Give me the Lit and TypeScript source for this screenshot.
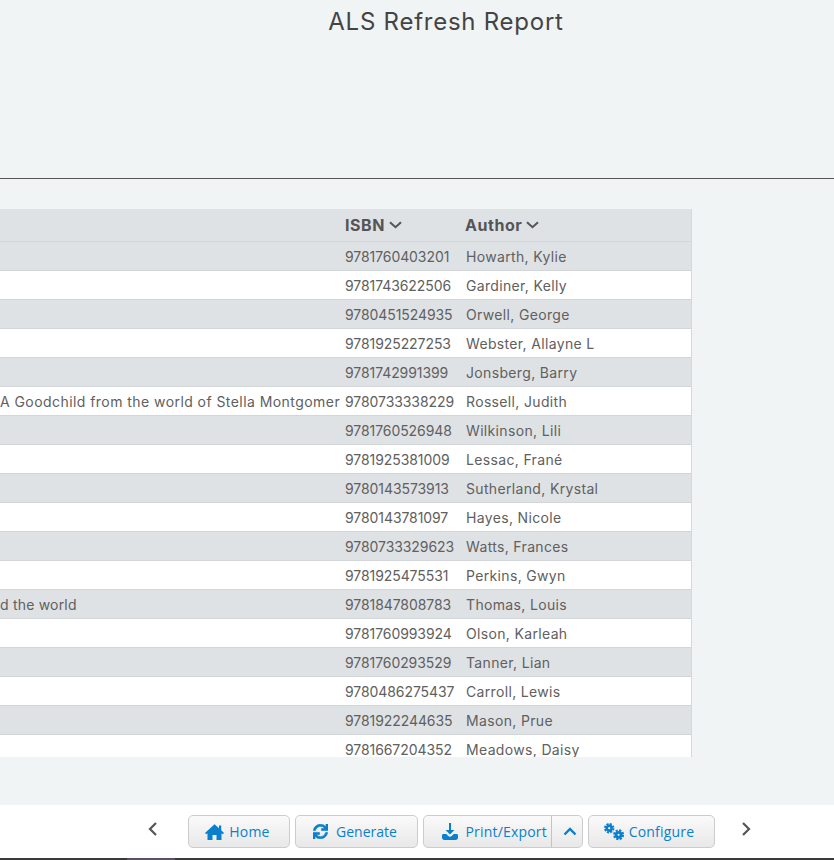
import { LitElement, html, css, svg } from "lit";
import { customElement } from "lit/decorators.js";

const rows: [string, string, string][] = [
  ["", "9781760403201", "Howarth, Kylie"],
  ["", "9781743622506", "Gardiner, Kelly"],
  ["", "9780451524935", "Orwell, George"],
  ["", "9781925227253", "Webster, Allayne L"],
  ["", "9781742991399", "Jonsberg, Barry"],
  ["A Goodchild from the world of Stella Montgomer", "9780733338229", "Rossell, Judith"],
  ["", "9781760526948", "Wilkinson, Lili"],
  ["", "9781925381009", "Lessac, Frané"],
  ["", "9780143573913", "Sutherland, Krystal"],
  ["", "9780143781097", "Hayes, Nicole"],
  ["", "9780733329623", "Watts, Frances"],
  ["", "9781925475531", "Perkins, Gwyn"],
  ["d the world", "9781847808783", "Thomas, Louis"],
  ["", "9781760993924", "Olson, Karleah"],
  ["", "9781760293529", "Tanner, Lian"],
  ["", "9780486275437", "Carroll, Lewis"],
  ["", "9781922244635", "Mason, Prue"],
  ["", "9781667204352", "Meadows, Daisy"],
];

const chevDown = svg`<svg class="sort" viewBox="0 0 13 8"><polyline points="1,1.2 6.5,6.2 12,1.2" fill="none" stroke="currentColor" stroke-width="2"/></svg>`;

const home = svg`<svg class="ic" style="width:19px;height:16px" viewBox="0 0 19 16"><path fill="currentColor" d="M9.5.3 14 4.3V1.5h2.2v4.8L19 8.9l-1.2 1.3-1.3-1V16h-5v-5H7.5v5h-5V9.2l-1.3 1L0 8.9z"/></svg>`;

const sync = svg`<svg class="ic" style="width:15px;height:15px" viewBox="0 0 512 512"><path fill="currentColor" stroke="currentColor" stroke-width="22" d="M440.65 12.57l4 82.77A247.16 247.16 0 0 0 255.83 8C134.73 8 33.91 94.92 12.29 209.82A12 12 0 0 0 24.09 224h49.05a12 12 0 0 0 11.67-9.26 175.91 175.91 0 0 1 317-56.94l-101.46-4.86a12 12 0 0 0-12.57 12v47.41a12 12 0 0 0 12 12H500a12 12 0 0 0 12-12V12a12 12 0 0 0-12-12h-47.37a12 12 0 0 0-11.98 12.57zM255.83 432a175.61 175.61 0 0 1-146-77.8l101.8 4.87a12 12 0 0 0 12.57-12v-47.4a12 12 0 0 0-12-12H12a12 12 0 0 0-12 12V500a12 12 0 0 0 12 12h47.35a12 12 0 0 0 12-12.6l-4.15-82.57A247.17 247.17 0 0 0 255.83 504c121.11 0 221.93-86.92 243.55-201.82a12 12 0 0 0-11.8-14.18h-49.05a12 12 0 0 0-11.67 9.26A175.86 175.86 0 0 1 255.83 432z"/></svg>`;

const download = svg`<svg class="ic" style="width:16px;height:17px" viewBox="0 0 16 17"><path fill="currentColor" d="M7 0h2v7h3.4L8 11.6 3.6 7H7z"/><path fill="currentColor" d="M1.4 11h3l1.8 1.9c1 1 2.6 1 3.6 0L11.6 11h3c.8 0 1.4.6 1.4 1.4v2.2c0 1.3-1 2.4-2.4 2.4H2.4C1 17 0 15.9 0 14.6v-2.2C0 11.6.6 11 1.4 11z"/></svg>`;

const cogs = svg`<svg class="ic" style="width:20px;height:18px" viewBox="0 0 20 18"><g fill="none" stroke="currentColor"><circle cx="5.2" cy="5.2" r="2.4" stroke-width="2.6"/><circle cx="5.2" cy="5.2" r="4.2" stroke-width="2" stroke-dasharray="2.1 1.2"/><circle cx="14.6" cy="11.8" r="2.5" stroke-width="2.8"/><circle cx="14.6" cy="11.8" r="4.5" stroke-width="2" stroke-dasharray="2.2 1.33"/></g></svg>`;

@customElement("app-root")
export class AppRoot extends LitElement {
  static styles = css`
    :host {
      display: flex;
      flex-direction: column;
      height: 860px;
      overflow: hidden;
      background: #f0f4f5;
      font-family: "Inter", "Liberation Sans", sans-serif;
      color: #606060;
    }
    .head {
      height: 178px;
      flex: none;
      border-bottom: 1px solid #555;
      padding-left: 58px;
      text-align: center;
    }
    h1 {
      margin: 0;
      padding-top: 6px;
      font-size: 24px;
      line-height: 32px;
      font-weight: 400;
      letter-spacing: 0.75px;
      color: #444;
    }
    .tablewrap {
      margin-top: 30px;
      width: 692px;
      height: 548px;
      flex: none;
      overflow: hidden;
      border-right: 1px solid #d4d8db;
      box-sizing: border-box;
    }
    .row {
      display: grid;
      grid-template-columns: 340px 120px 1fr;
      height: 29px;
      box-sizing: border-box;
      border-bottom: 1px solid #d3d6d9;
      background: #fff;
      font-size: 14px;
      line-height: 30px;
      letter-spacing: 0.34px;
      white-space: nowrap;
    }
    .row.odd { background: #dfe2e5; }
    .row.hd {
      height: 33px;
      background: #dfe2e5;
      font-weight: 700;
      font-size: 16px;
      line-height: 32px;
      letter-spacing: 0.55px;
      color: #555;
    }
    .cell { padding-left: 5px; overflow: hidden; }
    .author { padding-left: 6px; }
    .title { padding-left: 0; letter-spacing: 0.2px; }
    .title.wide { letter-spacing: 0.44px; }
    .isbn { letter-spacing: -0.08px; }
    .sort { width: 13px; height: 8px; margin-left: 4px; vertical-align: 2px; }
    .bar {
      margin-top: 48px;
      height: 53px;
      flex: none;
      background: #fff;
      display: flex;
      align-items: flex-start;
      padding: 10px 0 0 147px;
      box-sizing: border-box;
    }
    .nav {
      width: 12px;
      height: 16px;
      margin-top: 6px;
      color: #555;
      flex: none;
    }
    .btns { display: flex; gap: 5px; margin: 0 25px 0 29px; }
    .btn {
      box-sizing: border-box;
      height: 33px;
      padding-right: 4px;
      border: 1px solid #ccc;
      border-radius: 5px;
      background: linear-gradient(#fafafa, #e8e8e8);
      color: #0a7fcb;
      font-family: "Open Sans", "Noto Sans", sans-serif;
      font-size: 14px;
      letter-spacing: 0.2px;
      display: flex;
      align-items: center;
      justify-content: center;
      gap: 5px;
    }
    .split { padding: 0; justify-content: flex-start; }
    .split .main {
      width: 128px;
      height: 100%;
      display: flex;
      align-items: center;
      justify-content: flex-end;
      gap: 7px;
      padding-right: 4px;
      box-sizing: border-box;
      border-right: 1px solid #c4c4c4;
    }
    .split .more {
      flex: 1;
      display: flex;
      justify-content: center;
    }
    .w-home { width: 102px; padding-right: 3px; }
    .w-gen { width: 123px; letter-spacing: 0; gap: 8px; padding-right: 3px; }
    .w-print { width: 160px; }
    .w-conf { width: 127px; padding-right: 5px; }
    .ic { flex: none; }
    .up { width: 14px; height: 9px; }
    .strip { height: 2px; flex: none; background: #3a3a3a; padding-left: 127px; }
    .strip div { width: 48px; height: 2px; background: #5c5066; }
  `;

  render() {
    return html`
      <div class="head"><h1>ALS Refresh Report</h1></div>
      <div class="tablewrap">
        <div class="row hd">
          <div class="cell title"></div>
          <div class="cell">ISBN${chevDown}</div>
          <div class="cell">Author${chevDown}</div>
        </div>
        ${rows.map(
          (r, i) => html`<div class="row ${i % 2 === 0 ? "odd" : ""}">
            <div class="cell title ${r[0].length > 20 ? "wide" : ""}">${r[0]}</div>
            <div class="cell isbn">${r[1]}</div>
            <div class="cell author">${r[2]}</div>
          </div>`
        )}
      </div>
      <div class="bar">
        <svg class="nav" viewBox="0 0 12 16"><polyline points="9,2 3,8 9,14" fill="none" stroke="currentColor" stroke-width="2.2"/></svg>
        <div class="btns">
          <div class="btn w-home">${home}Home</div>
          <div class="btn w-gen">${sync}Generate</div>
          <div class="btn split w-print">
            <div class="main">${download}Print/Export</div>
            <div class="more"><svg class="up" viewBox="0 0 14 9"><polyline points="1.5,7.5 7,2 12.5,7.5" fill="none" stroke="currentColor" stroke-width="2.4"/></svg></div>
          </div>
          <div class="btn w-conf">${cogs}Configure</div>
        </div>
        <svg class="nav" viewBox="0 0 12 16"><polyline points="3,2 9,8 3,14" fill="none" stroke="currentColor" stroke-width="2.2"/></svg>
      </div>
      <div class="strip"><div></div></div>
    `;
  }
}
